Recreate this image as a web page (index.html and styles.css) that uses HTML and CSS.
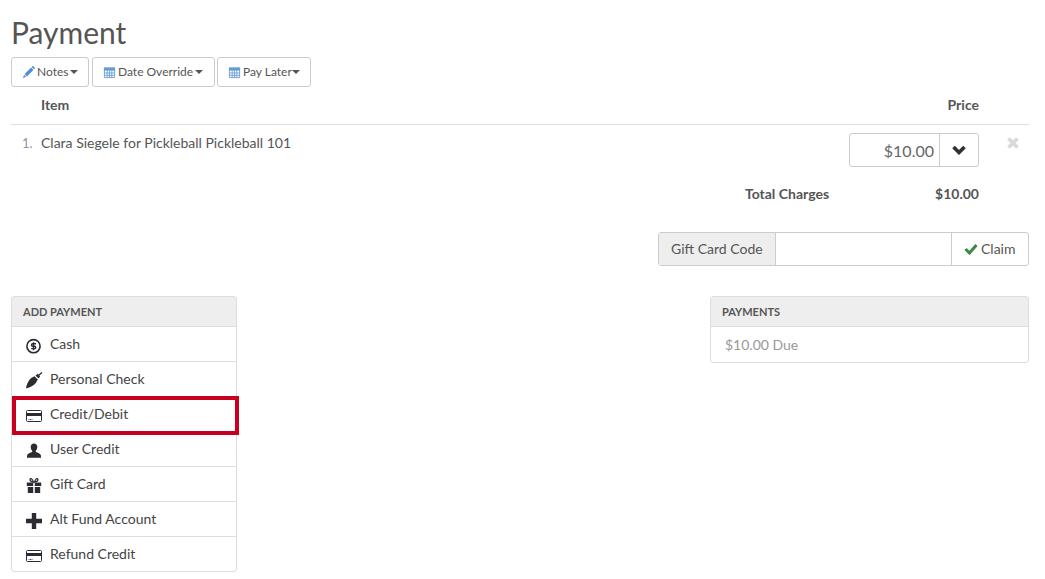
FILE: index.html
```html
<!DOCTYPE html>
<html lang="en">
<head>
<meta charset="utf-8">
<title>Payment</title>
<link rel="stylesheet" href="styles.css">
</head>
<body>
<main class="page">
  <h1 class="title">Payment</h1>
  <div class="toolbar">
    <button class="btn btn-notes"><svg class="ico" viewBox="0 0 14 14"><path fill="#4a90d9" d="M2.800 8.700 9.800 1.700l2.500 2.500-7 7z"/><path fill="#3f7fc4" d="m10.500 1 .6-.6c.4-.3.8-.3 1.100 0l1.400 1.400c.3.3.3.8 0 1.100l-.6.6z"/><path fill="#8d7fc7" d="m2.300 9.400 2.300 2.300-3.800 1.500z"/></svg>Notes<span class="caret"></span></button>
    <button class="btn btn-date"><svg class="ico" viewBox="0 0 14 14"><path fill="#5b9bd5" d="M1 1.500h12V5H1z"/><path fill="none" stroke="#6f9fd8" d="M1.500 2.500h11v10h-11zM1.500 7.500h11M1.500 10h11M4.500 5v7.500M7 5v7.500M9.500 5v7.500"/></svg>Date Override<span class="caret"></span></button>
    <button class="btn btn-later"><svg class="ico" viewBox="0 0 14 14"><path fill="#5b9bd5" d="M1 1.500h12V5H1z"/><path fill="none" stroke="#6f9fd8" d="M1.500 2.500h11v10h-11zM1.500 7.500h11M1.500 10h11M4.500 5v7.500M7 5v7.500M9.500 5v7.500"/></svg>Pay Later<span class="caret caret-tight"></span></button>
  </div>

  <div class="table-head">
    <span class="col-item">Item</span>
    <span class="col-price">Price</span>
  </div>
  <div class="table-row">
    <span class="row-num">1.</span>
    <span class="row-text">Clara Siegele for Pickleball Pickleball 101</span>
    <div class="price-group">
      <span class="price-input">$10.00</span>
      <span class="price-toggle"><svg class="chev" viewBox="0 0 14 10"><path fill="none" stroke="#33302c" stroke-width="3.600" d="M1.500 2 7 7.500 12.500 2"/></svg></span>
    </div>
    <svg class="remove" viewBox="0 0 12 12"><path fill="none" stroke="#d9d9d9" stroke-width="3.800" d="m1.500 1.500 9 9m0-9-9 9"/></svg>
  </div>
  <div class="total-row">
    <span class="total-label">Total Charges</span>
    <span class="total-value">$10.00</span>
  </div>

  <div class="gift-row">
    <div class="gift-group">
      <span class="gift-addon">Gift Card Code</span>
      <span class="gift-input"></span>
      <span class="gift-claim"><svg class="check" viewBox="0 0 14 12"><path fill="none" stroke="#3c8a47" stroke-width="3" d="m1.500 6 4 4 7-8"/></svg>Claim</span>
    </div>
  </div>

  <div class="panels">
    <section class="panel panel-add">
      <h2 class="panel-head">ADD PAYMENT</h2>
      <ul class="pay-list">
        <li class="pay-item"><svg class="pay-ico" viewBox="0 0 16 16"><circle cx="7.500" cy="9.200" r="6.600" fill="none" stroke="#2b2b33" stroke-width="1.600"/><path fill="none" stroke="#2b2b33" stroke-width="1.400" d="M10 6.800H6.700a1.200 1.200 0 0 0 0 2.400h1.800a1.200 1.200 0 0 1 0 2.400H5.200M7.500 5.200v8"/></svg>Cash</li>
        <li class="pay-item"><svg class="pay-ico" viewBox="0 0 16 16"><path fill="#2b2b33" d="M0 16.500C.6 12 2.400 8.400 5.200 6L8.500 4.200l3.300 3.300-1.800 3.300C7.600 13.600 4.500 15.700 0 16.500z"/><path fill="#2b2b33" d="m9.500 3.500 2.300-1.700 2.400 2.400-1.700 2.300z"/><path stroke="#2b2b33" stroke-width="1.300" d="m13 3 3-2.500"/></svg>Personal Check</li>
        <li class="pay-item pay-highlight"><svg class="pay-ico" viewBox="0 0 16 16"><path fill="none" stroke="#2b2b33" d="M.5 4.500c0-.6.400-1 1-1h13c.6 0 1 .4 1 1v9c0 .6-.4 1-1 1h-13c-.6 0-1-.4-1-1z"/><path fill="#2b2b33" d="M1 6h14v3H1z"/><path stroke="#5d3a8c" d="M2.500 12.500h1m.5 0h1m.5 0h1"/></svg>Credit/Debit</li>
        <li class="pay-item"><svg class="pay-ico" viewBox="0 0 16 16"><path fill="#2b2b33" d="M8 1.500c2 0 3.300 1.400 3.300 3.500 0 1.700-.8 3.100-1.500 3.800v1.300c1.800.7 4.700 1.300 5.200 3.700v2H1v-2c.5-2.400 3.400-3 5.200-3.700V8.800C5.500 8.100 4.700 6.700 4.700 5c0-2.100 1.300-3.500 3.300-3.500z"/></svg>User Credit</li>
        <li class="pay-item"><svg class="pay-ico" viewBox="0 0 16 16"><path fill="none" stroke="#2b2b33" stroke-width="1.300" d="M7.400 5.200C5.600 4.800 3.900 3.600 4.100 2.300 4.300 1 6.600 1.300 7.400 5.200zm1.200 0c1.800-.4 3.500-1.600 3.300-2.900-.2-1.300-2.500-1-3.300 2.900z"/><path fill="#2b2b33" d="M.8 5.500h6.400V9H.8zm8 0h6.400V9H8.800zM1.800 10h5.400v6H1.800zm7 0h5.400v6H8.800z"/></svg>Gift Card</li>
        <li class="pay-item"><svg class="pay-ico" viewBox="0 0 16 16"><path fill="#2b2b33" d="M5.800 1h4.400v5.800H16v4.400h-5.800V17H5.800v-5.800H0V6.800h5.800z"/></svg>Alt Fund Account</li>
        <li class="pay-item"><svg class="pay-ico" viewBox="0 0 16 16"><path fill="none" stroke="#2b2b33" d="M.5 4.500c0-.6.400-1 1-1h13c.6 0 1 .4 1 1v9c0 .6-.4 1-1 1h-13c-.6 0-1-.4-1-1z"/><path fill="#2b2b33" d="M1 6h14v3H1z"/><path stroke="#5d3a8c" d="M2.500 12.500h1m.5 0h1m.5 0h1"/></svg>Refund Credit</li>
      </ul>
    </section>
    <section class="panel panel-payments">
      <h2 class="panel-head">PAYMENTS</h2>
      <p class="due">$10.00 Due</p>
    </section>
  </div>
</main>
</body>
</html>
```
FILE: styles.css
```css
*, *::before, *::after { box-sizing: border-box; }
html, body { margin: 0; background: #fff; }
body { font-family: Lato, "Liberation Sans", sans-serif; font-size: 14px; line-height: 20px; color: #555; overflow: hidden; }
.page { width: 1045px; height: 579px; padding: 0 16px 0 11px; }
.title { margin: 0; padding-top: 14px; height: 57px; font-size: 30px; line-height: 36px; font-weight: 400; color: #555; }

.toolbar { display: flex; gap: 3px; height: 30px; }
.btn { display: flex; align-items: center; height: 30px; padding: 0 0 0 10px; background: #fff; border: 1px solid #ccc; border-radius: 3px; font: 12px/18px Lato, "Liberation Sans", sans-serif; color: #555; white-space: nowrap; }
.btn-notes { width: 78px; }
.btn-date { width: 123px; }
.btn-later { width: 94px; margin-left: -1px; }
.ico { width: 13px; height: 13px; margin-right: 2px; flex: none; }
.caret { width: 0; height: 0; margin-left: 2px; border-left: 4px solid transparent; border-right: 4px solid transparent; border-top: 4px solid #555; }
.caret-tight { margin-left: 0; }

.table-head { display: flex; justify-content: space-between; height: 38px; padding: 8px 50px 0 30px; border-bottom: 1px solid #ddd; font-weight: 700; }
.table-row { display: flex; height: 51px; padding-top: 8px; }
.row-num { width: 30px; padding-left: 11px; color: #8a97a6; font-size: 13px; }
.row-text { flex: 1; }
.price-group { display: flex; width: 130px; height: 34px; margin-left: auto; border: 1px solid #ccc; border-radius: 3px; }
.price-input { width: 89px; padding-right: 5px; text-align: right; font-size: 16px; line-height: 34px; color: #666; }
.price-toggle { display: flex; flex: 1; align-items: center; justify-content: center; border-left: 1px solid #ccc; }
.chev { width: 14px; height: 10px; }
.remove { width: 12px; height: 12px; margin: 4px 10px 0 28px; }

.total-row { display: flex; justify-content: flex-end; height: 56px; padding: 8px 50px 0 0; font-weight: 700; }
.total-label { margin-right: 106px; }

.gift-row { display: flex; justify-content: flex-end; height: 64px; }
.gift-group { display: flex; width: 371px; height: 34px; border: 1px solid #ccc; border-radius: 3px; }
.gift-addon { width: 117px; padding: 6px 0 0 12px; background: #eee; border-right: 1px solid #ccc; color: #555; }
.gift-input { flex: 1; }
.gift-claim { display: flex; align-items: center; width: 77px; padding-left: 12px; border-left: 1px solid #ccc; }
.check { width: 14px; height: 12px; margin-right: 3px; }

.panels { display: flex; justify-content: space-between; align-items: flex-start; }
.panel { border: 1px solid #ddd; border-radius: 3px; background: #fff; }
.panel-add { width: 226px; }
.panel-payments { width: 319px; }
.panel-head { margin: 0; height: 30px; padding: 6px 11px 0; background: #eee; border-bottom: 1px solid #ddd; font-size: 11px; line-height: 18px; font-weight: 700; color: #555; }
.pay-list { margin: 0; padding: 0; list-style: none; }
.pay-item { position: relative; display: flex; align-items: flex-start; height: 35px; padding: 7px 0 0 14px; border-bottom: 1px solid #ddd; color: #444; }
.pay-item:last-child { height: 34px; border-bottom: 0; }
.pay-ico { width: 16px; height: 16px; margin: 3px 8px 0 0; flex: none; overflow: visible; }
.pay-highlight::after { content: ""; position: absolute; left: 0; top: -1px; width: 227px; height: 39px; border: 4px solid #c8001f; }
.due { margin: 0; padding: 8px 14px 7px; color: #999; }
```
